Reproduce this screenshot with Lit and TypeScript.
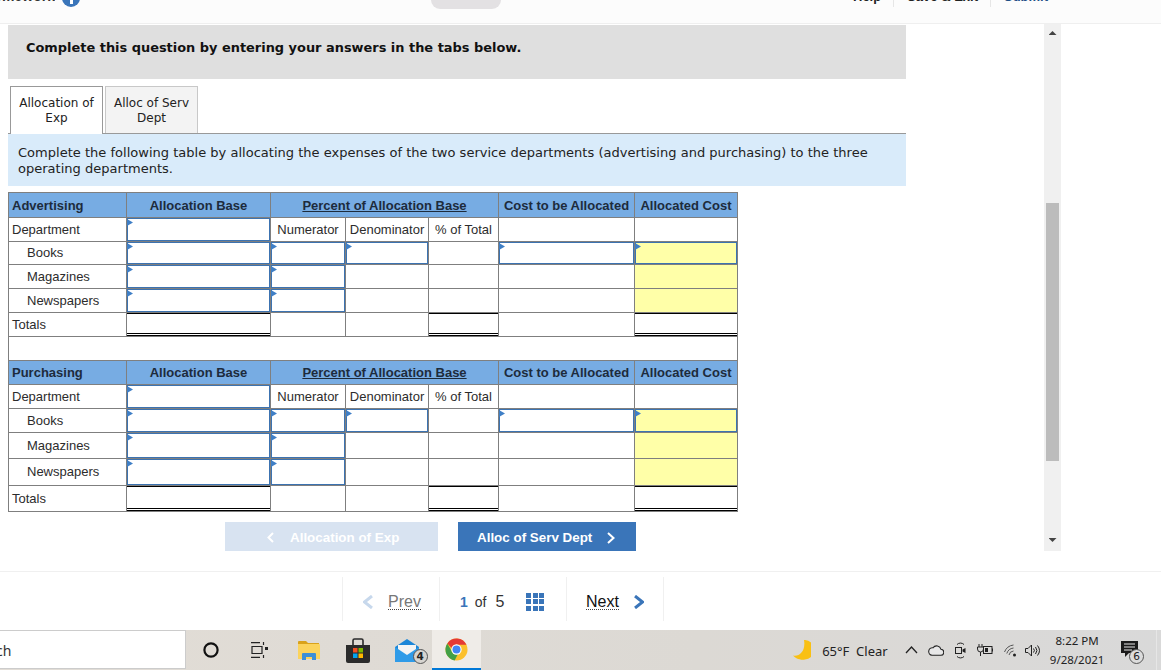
import { LitElement, html, css } from "lit";
import { customElement } from "lit/decorators.js";

type Section = { name: string; head: number; cls: string; rows: number[]; after: boolean };

const sections: Section[] = [
  { name: "Advertising", head: 25, cls: "head low", rows: [24, 23, 24, 24, 24], after: true },
  { name: "Purchasing", head: 24, cls: "head", rows: [24, 24, 26, 27, 26], after: false },
];

@customElement("app-root")
export class AppRoot extends LitElement {
  static styles = css`
    :host { display: flex; flex-direction: column; width: 1161px; height: 670px; overflow: hidden; background: #fff; font-family: "Liberation Sans", Arial, sans-serif; }
    .top { height: 23px; flex: none; background: #fcfcfc; border-bottom: 1px solid #efefef; display: flex; overflow: hidden; color: #222; font-size: 13px; font-weight: 700; }
    .hw { width: 55px; flex: none; height: 4px; overflow: hidden; display: flex; justify-content: flex-end; align-items: flex-end; white-space: nowrap; line-height: 16px; color: #333; font-size: 14px; }
    .info { margin: -11px 0 0 7px; width: 18px; height: 18px; border-radius: 50%; background: #3a75b9; flex: none; position: relative; }
    .info::after { content: ""; position: absolute; left: 8px; top: 9px; width: 2.5px; height: 6px; background: #fff; }
    .pill { margin: 0 0 0 351px; width: 70px; height: 9px; background: #e3e1e3; border-radius: 0 0 10px 10px; flex: none; }
    .links { margin-left: 339px; display: flex; height: 7px; }
    .links span { display: block; margin-top: -11px; line-height: 16px; padding: 0 12px 0 13px; white-space: nowrap; }
    .links i { display: block; width: 1px; height: 7px; background: #e6e6e6; }
    .submit { color: #1f4f86; }
    .main { height: 547px; flex: none; display: flex; }
    .content { width: 1036px; flex: none; padding: 1px 0 0 8px; }
    .banner { width: 898px; height: 54px; background: #dfdfdf; display: flex; align-items: center; padding-left: 18px; box-sizing: border-box; font: 700 12.93px "DejaVu Sans", Verdana, sans-serif; color: #111; padding-bottom: 9px; }
    .tabs { width: 898px; height: 48px; margin-top: 7px; display: flex; gap: 2px; padding-left: 2px; box-sizing: border-box; border-bottom: 1px solid #999; }
    .tab { width: 93px; height: 47px; box-sizing: border-box; text-align: center; font: 12px/15px "DejaVu Sans", Verdana, sans-serif; color: #222; padding-top: 9px; border: 1px solid #c8c8c8; border-bottom: none; background: #f3f3f3; }
    .tab.on { background: #fff; border-color: #999; height: 48px; position: relative; }
    .note { width: 898px; height: 52px; box-sizing: border-box; background: #d9ebfa; padding: 11px 10px 0; font: 13px/16px "DejaVu Sans", Verdana, sans-serif; color: #222; letter-spacing: 0.015px; }
    table { border-collapse: collapse; table-layout: fixed; width: 729px; margin-top: 6px; font-size: 13px; color: #2c2c2c; }
    td { border: 1px solid #7f7f7f; padding: 0; position: relative; white-space: nowrap; overflow: visible; line-height: 14px; text-align: center; background: #fff; }
    tr.head td { background: #77ace3; font-weight: 700; color: #1d2b3c; }
    tr.low td { padding-top: 1px; }
    td.left { text-align: left; padding-left: 3px; }
    td.ind { text-align: left; padding-left: 18px; }
    td.under { text-decoration: underline; }
    td.input { box-shadow: inset 0 0 0 1px #3c73b1; }
    td.input::before { content: ""; position: absolute; left: 0; top: 1px; width: 6px; height: 7px; background: #3f7fc6; clip-path: polygon(0 0, 100% 50%, 0 100%); }
    td.yellow { background: #ffffa8; }
    td.total { box-shadow: inset 0 1px 0 #000, inset 0 -1px 0 #000, inset 0 -2px 0 #fff, inset 0 -3px 0 #000; }
    .btns { display: flex; gap: 20px; margin: 10px 0 0 217px; }
    .btn { height: 29px; box-sizing: border-box; display: flex; align-items: center; color: #fff; font-size: 13.4px; font-weight: 700; background: #3a75b9; padding-top: 2px; }
    .btn.prev { width: 213px; background: #d8e3f1; padding-left: 42px; gap: 16px; }
    .btn.next { width: 178px; padding-left: 19px; gap: 15px; }
    .scroll { width: 17px; height: 527px; background: #f0f0f0; flex: none; display: flex; flex-direction: column; align-items: center; }
    .up { margin-top: 7px; width: 8px; height: 4px; background: #444; clip-path: polygon(50% 0, 100% 100%, 0 100%); }
    .thumb { margin-top: 168px; width: 13px; height: 258px; background: #bcbcbc; }
    .down { margin-top: 77px; width: 8px; height: 4px; background: #444; clip-path: polygon(0 0, 100% 0, 50% 100%); }
    .foot { height: 59px; flex: none; box-sizing: border-box; border-top: 1px solid #f0f0f0; padding: 5px 0 0 342px; display: flex; }
    .seg { height: 44px; box-sizing: border-box; border-left: 1px solid #f0f0f0; display: flex; align-items: center; flex: none; padding-top: 5px; font-size: 16px; }
    .seg.a { width: 97px; padding-left: 20px; gap: 15px; color: #777; }
    .seg.b { width: 127px; padding-left: 20px; color: #333; }
    .seg.c { width: 98px; padding-left: 19px; gap: 15px; color: #111; border-right: 1px solid #f0f0f0; }
    .dot { border-bottom: 1px dotted #444; line-height: 15px; }
    .n1 { color: #3a75b9; font-weight: 700; font-size: 14px; }
    .of { font-size: 14px; margin: 0 9px 0 7px; }
    .grid { margin-left: 22px; display: grid; grid-template-columns: repeat(3, 5px); grid-auto-rows: 5px; gap: 1.5px; }
    .grid i { background: #3a75b9; display: block; }
    .bar { height: 40px; flex: none; display: flex; background: linear-gradient(90deg, #e2ddd6, #dcd9d4 60%, #d9d9d9); color: #222; font-family: "Noto Sans", "Open Sans", sans-serif; }
    .search { width: 186px; height: 39px; box-sizing: border-box; background: #fff; border-top: 1px solid #ccc; border-bottom: 1px solid #ccc; border-right: 1px solid #ccc; font-size: 14px; color: #333; display: flex; align-items: center; overflow: hidden; flex: none; padding-top: 2px; }
    .search span { margin-left: -33px; }
    .slot { width: 49.2px; height: 40px; flex: none; display: flex; align-items: center; justify-content: center; position: relative; box-sizing: border-box; }
    .slot.active { background: #efece8; border-bottom: 2px solid #0078d7; }
    .badge { position: absolute; width: 15px; height: 15px; border-radius: 50%; box-sizing: border-box; border: 1px solid #555; background: #d6d4d0; font: 700 10.5px/13px "DejaVu Sans", sans-serif; text-align: center; color: #222; }
    .b4 { left: 30px; top: 19px; }
    .b6 { right: -5px; top: 8px; background: #dcdcdc; font-weight: 400; }
    .tray { display: flex; align-items: center; margin-left: 312px; flex: none; height: 40px; }
    .temp { font-size: 13px; margin: 2px 15px 0 11px; white-space: pre; width: 68px; color: #222; }
    .tray svg { display: block; flex: none; }
    .m1 { margin-right: 10px; }
    .m2 { margin-right: 11px; }
    .m3 { margin-right: 8px; }
    .clock { width: 66px; margin: 0 11px 0 3px; text-align: center; font-size: 11.5px; line-height: 19px; color: #222; flex: none; }
    .note-ic { position: relative; flex: none; width: 18px; height: 18px; }
    .edge { width: 1px; height: 40px; background: #e6e6e6; margin-left: 17px; flex: none; }
  `;

  section(s: Section) {
    const h = s.rows;
    return html`
      <tr class=${s.cls} style="height:${s.head}px">
        <td class="left">${s.name}</td><td>Allocation Base</td>
        <td class="under" colspan="3">Percent of Allocation Base</td>
        <td>Cost to be Allocated</td><td>Allocated Cost</td>
      </tr>
      <tr style="height:${h[0]}px">
        <td class="left">Department</td><td class="input"></td><td>Numerator</td><td>Denominator</td><td>% of Total</td><td></td><td></td>
      </tr>
      <tr style="height:${h[1]}px">
        <td class="ind">Books</td><td class="input"></td><td class="input"></td><td class="input"></td><td></td><td class="input"></td><td class="input yellow"></td>
      </tr>
      <tr style="height:${h[2]}px">
        <td class="ind">Magazines</td><td class="input"></td><td class="input"></td><td></td><td></td><td></td><td class="yellow"></td>
      </tr>
      <tr style="height:${h[3]}px">
        <td class="ind">Newspapers</td><td class="input"></td><td class="input"></td><td></td><td></td><td></td><td class="yellow"></td>
      </tr>
      <tr style="height:${h[4]}px">
        <td class="left">Totals</td><td class="total"></td><td></td><td></td><td class="total"></td><td></td><td class="total"></td>
      </tr>
      ${s.after ? html`<tr style="height:24px"><td colspan="7"></td></tr>` : ""}
    `;
  }

  chevron(color: string, left: boolean, w = 8, h = 12, sw = 2) {
    const d = left ? `M${w - 1} 1 L1.5 ${h / 2} L${w - 1} ${h - 1}` : `M1 1 L${w - 1.5} ${h / 2} L1 ${h - 1}`;
    return html`<svg width=${w} height=${h} viewBox="0 0 ${w} ${h}"><path d=${d} fill="none" stroke=${color} stroke-width=${sw}/></svg>`;
  }

  render() {
    const cols = [118, 144, 75, 83, 70, 136, 103];
    return html`
      <div class="top">
        <div class="hw">Homework</div>
        <div class="info"></div>
        <div class="pill"></div>
        <div class="links">
          <span>Help</span><i></i><span>Save &amp; Exit</span><i></i><span class="submit">Submit</span>
        </div>
      </div>
      <div class="main">
        <div class="content">
          <div class="banner">Complete this question by entering your answers in the tabs below.</div>
          <div class="tabs">
            <div class="tab on">Allocation of<br />Exp</div>
            <div class="tab">Alloc of Serv<br />Dept</div>
          </div>
          <div class="note">Complete the following table by allocating the expenses of the two service departments (advertising and purchasing) to the three operating departments.</div>
          <table>
            <colgroup>${cols.map((c) => html`<col style="width:${c}px" />`)}</colgroup>
            <tbody>${sections.map((s) => this.section(s))}</tbody>
          </table>
          <div class="btns">
            <div class="btn prev">${this.chevron("#fff", true, 7, 11)}<span>Allocation of Exp</span></div>
            <div class="btn next"><span>Alloc of Serv Dept</span>${this.chevron("#fff", false, 8, 12)}</div>
          </div>
        </div>
        <div class="scroll"><div class="up"></div><div class="thumb"></div><div class="down"></div></div>
      </div>
      <div class="foot">
        <div class="seg a">${this.chevron("#c7d8ec", true, 10, 14, 3)}<span class="dot">Prev</span></div>
        <div class="seg b">
          <span class="n1">1</span><span class="of">of</span><span>5</span>
          <div class="grid">${Array.from({ length: 9 }, () => html`<i></i>`)}</div>
        </div>
        <div class="seg c"><span class="dot">Next</span>${this.chevron("#3a75b9", false, 10, 14, 3)}</div>
      </div>
      <div class="bar">
        <div class="search"><span>Search</span></div>
        <div class="slot"><svg width="18" height="18" viewBox="0 0 18 18"><circle cx="9" cy="9" r="6.6" fill="none" stroke="#111" stroke-width="2.2"/></svg></div>
        <div class="slot"><svg width="17" height="16" viewBox="0 0 17 16"><path d="M0 .7h9M0 15.3h9M1 4.500h10v7H1z M12.500 0v3M12.500 13v3" fill="none" stroke="#222" stroke-width="1.2"/><rect x="14" y="5" width="3" height="3" fill="#222"/></svg></div>
        <div class="slot"><svg width="22" height="20" viewBox="0 0 22 20"><path d="M0 2a1 1 0 0 1 1-1h7l2 2h11v4H0z" fill="#d9a21b"/><path d="M0 4h21a1 1 0 0 1 1 1v14H0z" fill="#fbd35c"/><path d="M4 20v-6a1 1 0 0 1 1-1h12a1 1 0 0 1 1 1v6h-4v-3H8v3z" fill="#3c8fd6"/></svg></div>
        <div class="slot"><svg width="24" height="25" viewBox="0 0 24 25"><path d="M7 8V2.500A1.500 1.500 0 0 1 8.500 1h7A1.500 1.500 0 0 1 17 2.500V8" fill="none" stroke="#2a2a2a" stroke-width="1.600"/><path d="M0 7h24v16a2 2 0 0 1-2 2H2a2 2 0 0 1-2-2z" fill="#2b2b2b"/><rect x="7" y="10" width="4.500" height="4.500" fill="#f25022"/><rect x="12.500" y="10" width="4.500" height="4.500" fill="#7fba00"/><rect x="7" y="15.500" width="4.500" height="4.500" fill="#00a4ef"/><rect x="12.500" y="15.500" width="4.500" height="4.500" fill="#ffb900"/></svg></div>
        <div class="slot"><svg width="24" height="23" viewBox="0 0 24 23"><path d="M0 8 12 0l12 8v15H0z" fill="#1c86d8"/><path d="M3 6h18v8l-9 5-9-5z" fill="#f4f4f4"/><path d="M0 8l12 8 12-8v15H0z" fill="#2f9be8"/></svg><span class="badge b4">4</span></div>
        <div class="slot active"><svg width="23" height="23" viewBox="0 0 24 24"><circle cx="12" cy="12" r="11.500" fill="#fbc02d"/><path d="M2.400 5.700A11.500 11.500 0 0 1 22.400 7H12a5 5 0 0 0-4.800 3.600z" fill="#e53935"/><path d="M2.400 5.700 7.500 14.500a5 5 0 0 0 6 2.300l-3.400 6.600A11.500 11.500 0 0 1 2.400 5.700z" fill="#43a047"/><circle cx="12" cy="12" r="5.400" fill="#fff"/><circle cx="12" cy="12" r="4.200" fill="#4285f4"/></svg></div>
        <div class="tray">
          <svg width="18" height="20" viewBox="0 0 18 20"><path d="M11 0a9.500 9.500 0 0 1 1 19.500C7 20.500 2 18 0 15.500c6 1.500 13-4 11-15.500z" fill="#f9c013"/></svg>
          <div class="temp">65°F  Clear</div>
          <svg class="m1" width="13" height="8" viewBox="0 0 13 8"><path d="M1 7l5.500-6L12 7" fill="none" stroke="#222" stroke-width="1.300"/></svg>
          <svg class="m2" width="16" height="11" viewBox="0 0 16 11"><path d="M4 10.300h8.500a3 3 0 0 0 .5-6 4.500 4.500 0 0 0-8-1.500A3.500 3.500 0 0 0 4 10.300z" fill="#e8e8e8" stroke="#222" stroke-width="1.100"/></svg>
          <svg class="m2" width="11" height="17" viewBox="0 0 11 17"><path d="M2 2.500a5 5 0 0 1 7 0M2 14.500a5 5 0 0 0 7 0" fill="none" stroke="#222"/><rect x=".5" y="5.500" width="6" height="6" fill="none" stroke="#222"/><path d="M7.500 7.500l3-1.500v5l-3-1.500z" fill="#222"/></svg>
          <svg class="m2" width="16" height="12" viewBox="0 0 16 12"><path d="M2 0v3M5 0v3M.5 3h6v2a3 3 0 0 1-6 0zM3.500 8v4" fill="none" stroke="#222"/><rect x="6.500" y="2.500" width="8.500" height="7" fill="none" stroke="#222"/><rect x="8" y="4" width="3" height="4" fill="#222"/><rect x="15" y="4.500" width="1" height="3" fill="#222"/></svg>
          <svg class="m3" width="13" height="13" viewBox="0 0 13 13"><path d="M.5 8a11 11 0 0 1 9-7M2.800 9.500a8 8 0 0 1 6.700-5.500M5 11a5 5 0 0 1 4.500-4" fill="none" stroke="#555" stroke-width="1"/><circle cx="10.500" cy="11" r="1.500" fill="#222"/></svg>
          <svg width="16" height="13" viewBox="0 0 16 13"><path d="M.5 4.500h2.500L6.500 1v11L3 8.500H.5z" fill="none" stroke="#222"/><path d="M8.500 4.500a3 3 0 0 1 0 4M10.500 3a5.500 5.500 0 0 1 0 7M12.500 1.500a8 8 0 0 1 0 10" fill="none" stroke="#222"/></svg>
          <div class="clock">8:22 PM<br />9/28/2021</div>
          <div class="note-ic"><svg width="18" height="18" viewBox="0 0 18 18"><path d="M0 0h17v12H8l-4 4v-4H0z" fill="#1a1a1a"/><path d="M3 3h11M3 6h11M3 9h8" stroke="#e6e6e6" stroke-width="1"/></svg><span class="badge b6">6</span></div>
          <div class="edge"></div>
        </div>
      </div>
    `;
  }
}
